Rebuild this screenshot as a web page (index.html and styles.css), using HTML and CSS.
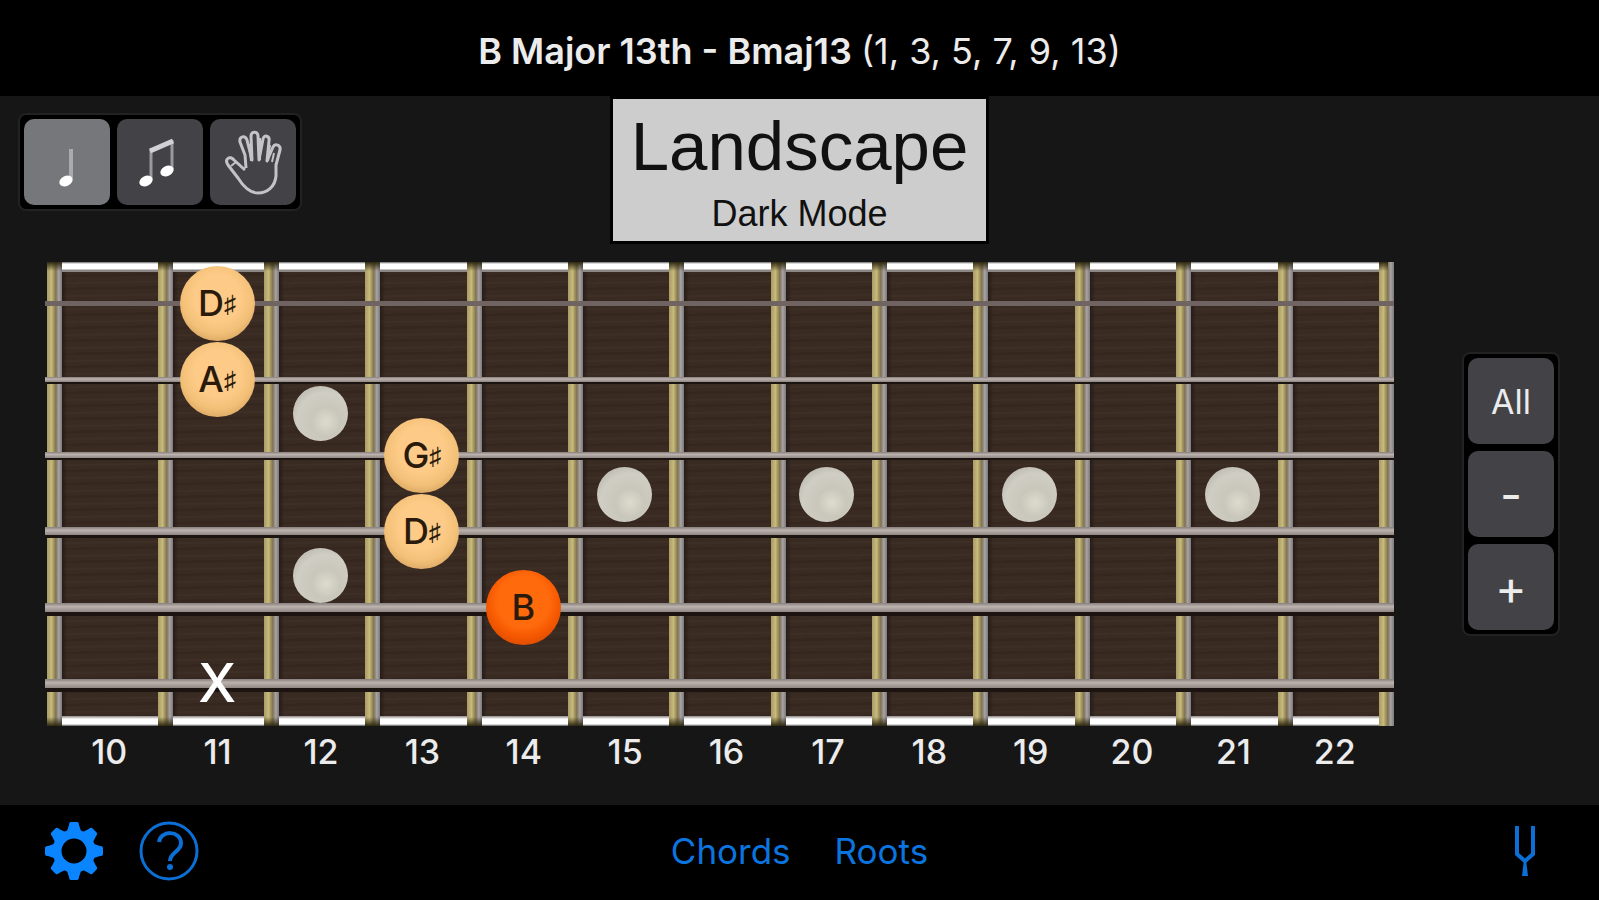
FILE: index.html
```html
<!DOCTYPE html>
<html lang="en">
<head>
  <meta charset="UTF-8" />
  <meta name="viewport" content="width=device-width, initial-scale=1" />
  <title>Bmaj13</title>
  <link rel="stylesheet" href="styles.css">
</head>
<body>
  <header class="title-bar">
    <h1>B Major 13th - Bmaj13 <span class="intervals">(1, 3, 5, 7, 9, 13)</span></h1>
  </header>

  <main>
    <div class="top-row">
      <div class="button-group">
        <button class="active" aria-label="Play note">
          <svg viewBox="0 0 86 86" width="86" height="86">
            <path d="M47 30V59" stroke="#a9aaae" stroke-width="4"/>
            <ellipse cx="42" cy="62" rx="7" ry="5" fill="#fff" transform="rotate(-25 42 62)"/>
          </svg>
        </button>
        <button aria-label="Play arpeggio">
          <svg viewBox="0 0 86 86" width="86" height="86" fill="none">
            <path d="M34 60V30M55 50V21" stroke="#9a9a9d" stroke-width="3"/>
            <path d="M33 32L56 22" stroke="#d2d2d4" stroke-width="5"/>
            <ellipse cx="29" cy="62" rx="7" ry="5" fill="#fff" transform="rotate(-25 29 62)"/>
            <ellipse cx="50" cy="52" rx="7" ry="5" fill="#fff" transform="rotate(-25 50 52)"/>
          </svg>
        </button>
        <button aria-label="Fingering">
          <svg class="hand" viewBox="0 0 86 86" width="86" height="86">
            <path d="M36 49L35 36L30 23C29 17 35 16 37 21L42 41L41 17C41 12 48 12 48 17L49 41L53 20C54 15 60 17 59 22L57 42L63 28C65 24 71 26 70 31L66 46V57C65 68 57 74 48 74C39 74 33 67 28 59L18 46C14 40 20 36 24 41L35 51"/>
            <path d="M39 25L41 42M50 19V41M60 26L58 42M64 34L62 43M21 47L26 43" stroke-width="2"/>
          </svg>
        </button>
      </div>
      <div class="mode-label">
        <h2>Landscape</h2>
        <p>Dark Mode</p>
      </div>
    </div>

    <div class="neck">
      <div class="board">
        <div class="frets">
          <div class="fret"></div>
          <div class="fret"></div>
          <div class="fret"><i class="inlay"></i><i class="inlay"></i></div>
          <div class="fret"></div>
          <div class="fret"></div>
          <div class="fret"><i class="inlay"></i></div>
          <div class="fret"></div>
          <div class="fret"><i class="inlay"></i></div>
          <div class="fret"></div>
          <div class="fret"><i class="inlay"></i></div>
          <div class="fret"></div>
          <div class="fret"><i class="inlay"></i></div>
          <div class="fret"></div>
          <div class="fret-end"></div>
        </div>
        <div class="strings">
          <div class="string plain"><span class="note fret-11">D<small>♯</small></span></div>
          <div class="string thin"><span class="note fret-11">A<small>♯</small></span></div>
          <div class="string thin bright"><span class="note fret-13">G<small>♯</small></span></div>
          <div class="string medium"><span class="note fret-13">D<small>♯</small></span></div>
          <div class="string heavy"><span class="note root fret-14">B</span></div>
          <div class="string heavy"><span class="muted fret-11">X</span></div>
        </div>
      </div>

      <div class="button-group vertical">
        <button>All</button>
        <button class="step" aria-label="Previous">-</button>
        <button class="step" aria-label="Next">+</button>
      </div>

      <div class="fret-numbers">
        <span>10</span>
        <span>11</span>
        <span>12</span>
        <span>13</span>
        <span>14</span>
        <span>15</span>
        <span>16</span>
        <span>17</span>
        <span>18</span>
        <span>19</span>
        <span>20</span>
        <span>21</span>
        <span>22</span>
      </div>
    </div>
  </main>

  <footer class="tab-bar">
    <div class="tab-side">
      <button aria-label="Settings">
        <svg viewBox="-30 -30 60 60" width="60" height="60">
          <g fill="#0a84ff">
            <g id="teeth">
              <path id="tooth" d="M-8 -17L-5 -26Q-5 -29 -3 -29H3Q5 -29 5 -26L8 -17Z"/>
              <use href="#tooth" transform="rotate(45)"/>
              <use href="#tooth" transform="rotate(90)"/>
              <use href="#tooth" transform="rotate(135)"/>
            </g>
            <use href="#teeth" transform="rotate(180)"/>
          </g>
          <circle r="17" fill="none" stroke="#0a84ff" stroke-width="9"/>
        </svg>
      </button>
      <button aria-label="Help">
        <svg viewBox="-30 -30 60 60" width="60" height="60" fill="none" stroke="#0b6fd6">
          <circle r="28" stroke-width="3"/>
          <path d="M-10 -9C-9 -21 12 -21 12 -8C12 1 1 1 1 10" stroke-width="4"/>
          <circle cx="1" cy="16" r="3" fill="#0b6fd6" stroke="none"/>
        </svg>
      </button>
    </div>
    <nav>
      <a href="#chords">Chords</a>
      <a href="#roots">Roots</a>
    </nav>
    <div class="tab-side right">
      <button aria-label="Tuner">
        <svg viewBox="0 0 24 54" width="24" height="54" fill="none" stroke="#0b6fd6">
          <path d="M4 2V30L12 37L20 30V2" stroke-width="4"/>
          <path d="M11 35H13L15 52H9Z" fill="#0b6fd6" stroke="none"/>
        </svg>
      </button>
    </div>
  </footer>
</body>
</html>
```

FILE: styles.css
```css
* {
  box-sizing: border-box;
}
body {
  margin: 0;
  min-height: 100vh;
  display: flex;
  flex-direction: column;
  background: #161616;
  color: #ececec;
  font-family: Inter, "Liberation Sans", sans-serif;
}
h1, h2, p {
  margin: 0;
}
button {
  padding: 0;
  border: none;
  background: none;
  color: inherit;
  font: inherit;
  cursor: pointer;
}
svg {
  display: block;
}

/* title */
.title-bar {
  display: flex;
  align-items: center;
  justify-content: center;
  height: 96px;
  padding-top: 6px;
  background: #000;
}
h1 {
  font-size: 36px;
  font-weight: 600;
  line-height: 44px;
}
.intervals {
  font-weight: 400;
}

main {
  flex: 1;
}

/* play modes and orientation label */
.top-row {
  display: grid;
  grid-template-columns: 1fr auto 1fr;
  align-items: start;
  height: 166px;
  padding: 0 18px;
}
.top-row .button-group {
  justify-self: start;
  margin-top: 17px;
}
.button-group {
  display: flex;
  gap: 7px;
  padding: 4px;
  border: 2px solid #222;
  border-radius: 8px;
  background: #000;
}
.button-group.vertical {
  flex-direction: column;
}
.button-group button {
  width: 86px;
  height: 86px;
  border-radius: 10px;
  background: #434246;
  font-size: 34px;
}
.button-group .active {
  background: #76777b;
}
.button-group .step {
  font-size: 48px;
}
.hand {
  fill: none;
  stroke: #c4c4c6;
  stroke-width: 3;
  stroke-linejoin: round;
}
.mode-label {
  padding: 7px 18px 1px;
  border: 3px solid #000;
  background: #cdcdcd;
  color: #111;
  font-family: "Liberation Sans", Arial, sans-serif;
  text-align: center;
}
h2 {
  font-size: 69px;
  font-weight: 400;
  line-height: 82px;
}
.mode-label p {
  font-size: 36px;
  line-height: 52px;
}

/* guitar neck */
.neck {
  display: grid;
  grid-template-columns: 1fr auto;
  column-gap: 68px;
  align-items: center;
  padding: 0 39px 0 45px;
}
.board {
  display: grid;
  height: 464px;
}
.frets, .strings {
  grid-area: 1 / 1;
}
.frets, .string, .fret-numbers {
  display: grid;
  grid-template-columns: 111fr 105fr repeat(11, 101fr) 15px;
  padding-left: 2px;
}
.fret, .fret-end {
  --wire: linear-gradient(90deg, #a99b63, #c6ba7e 30%, #a39560 45%, #83754a 58%, #8b8378 66%, #a9a4a4 78%, #7d797a);
  --cap: linear-gradient(#2e2810, #2e281000);
}
.fret {
  display: flex;
  flex-direction: column;
  align-items: center;
  justify-content: center;
  gap: 107px;
  padding: 0 4px 0 15px;
  background:
    var(--cap) 0 0 / 15px 9px no-repeat,
    linear-gradient(#2e281000, #2e2810) 0 100% / 15px 9px no-repeat,
    var(--wire) 0 0 / 15px 100% no-repeat,
    linear-gradient(#666, #fff 2px 7px, #8c8685 8px 10px) 15px 0 / 100% 10px no-repeat,
    linear-gradient(#8c8685, #fff 3px 8px, #555) 15px 100% / 100% 10px no-repeat,
    linear-gradient(90deg, #1a120f99, transparent) 15px 0 / 5px 100% no-repeat,
    repeating-linear-gradient(179deg, #00000014 0 2px, transparent 3px 7px, #ffffff05 8px 9px, transparent 10px 13px),
    #392a22;
}
.fret-end {
  background: var(--cap) 0 0 / 9px 9px no-repeat, var(--wire);
}
.inlay {
  width: 55px;
  height: 55px;
  border-radius: 50%;
  background: radial-gradient(circle at 60% 65%, #dedbce, #c9c7bb 30%, #d0cec4 60%, #aaa89e);
}
.strings {
  padding: 3px 0 5px;
}
.string {
  height: 76px;
  align-items: center;
  justify-items: center;
  background:
    linear-gradient(#87807e, #bcb2ae 40%, #8f8784) center / 100% var(--gauge) no-repeat,
    linear-gradient(transparent 50%, #1c1411 50%) center / 100% var(--shadow) no-repeat;
}
.plain {
  background: linear-gradient(#6f6461, #6f6461) center / 100% 5px no-repeat;
}
.thin {
  --gauge: 5px;
  --shadow: 10px;
}
.bright {
  --gauge: 6px;
}
.medium {
  --gauge: 8px;
  --shadow: 14px;
}
.heavy {
  --gauge: 9px;
  --shadow: 17px;
}
.fret-11 {
  grid-column: 2;
}
.fret-13 {
  grid-column: 4;
}
.fret-14 {
  grid-column: 5;
}
.note, .muted {
  margin-left: 12px;
}
.note {
  display: flex;
  align-items: center;
  justify-content: center;
  width: 75px;
  height: 75px;
  border-radius: 50%;
  background: radial-gradient(circle at 50% 42%, #fdcb87 40%, #f3c078 62%, #b98a4a);
  color: #2a1a0c;
  font-size: 36px;
  font-weight: 500;
}
.note small {
  font-size: 24px;
  font-weight: 900;
}
.root {
  background: radial-gradient(circle at 50% 42%, #ff6a0d 45%, #f55800 62%, #c03c00);
}
.muted {
  color: #fff;
  font-size: 54px;
  font-weight: 500;
  line-height: 76px;
}
.fret-numbers {
  padding-top: 4px;
  font-size: 34px;
  font-weight: 500;
  line-height: 44px;
  text-align: center;
}
.fret-numbers span {
  padding-left: 13px;
}

/* bottom bar */
.tab-bar {
  display: grid;
  grid-template-columns: 1fr auto 1fr;
  align-items: center;
  height: 95px;
  padding: 0 44px 4px;
  background: #000;
}
.tab-side {
  display: flex;
  gap: 35px;
}
.right {
  justify-content: flex-end;
  padding-right: 18px;
}
nav {
  display: flex;
  gap: 44px;
}
nav a {
  color: #0b74df;
  font-size: 35px;
  text-decoration: none;
}
```
